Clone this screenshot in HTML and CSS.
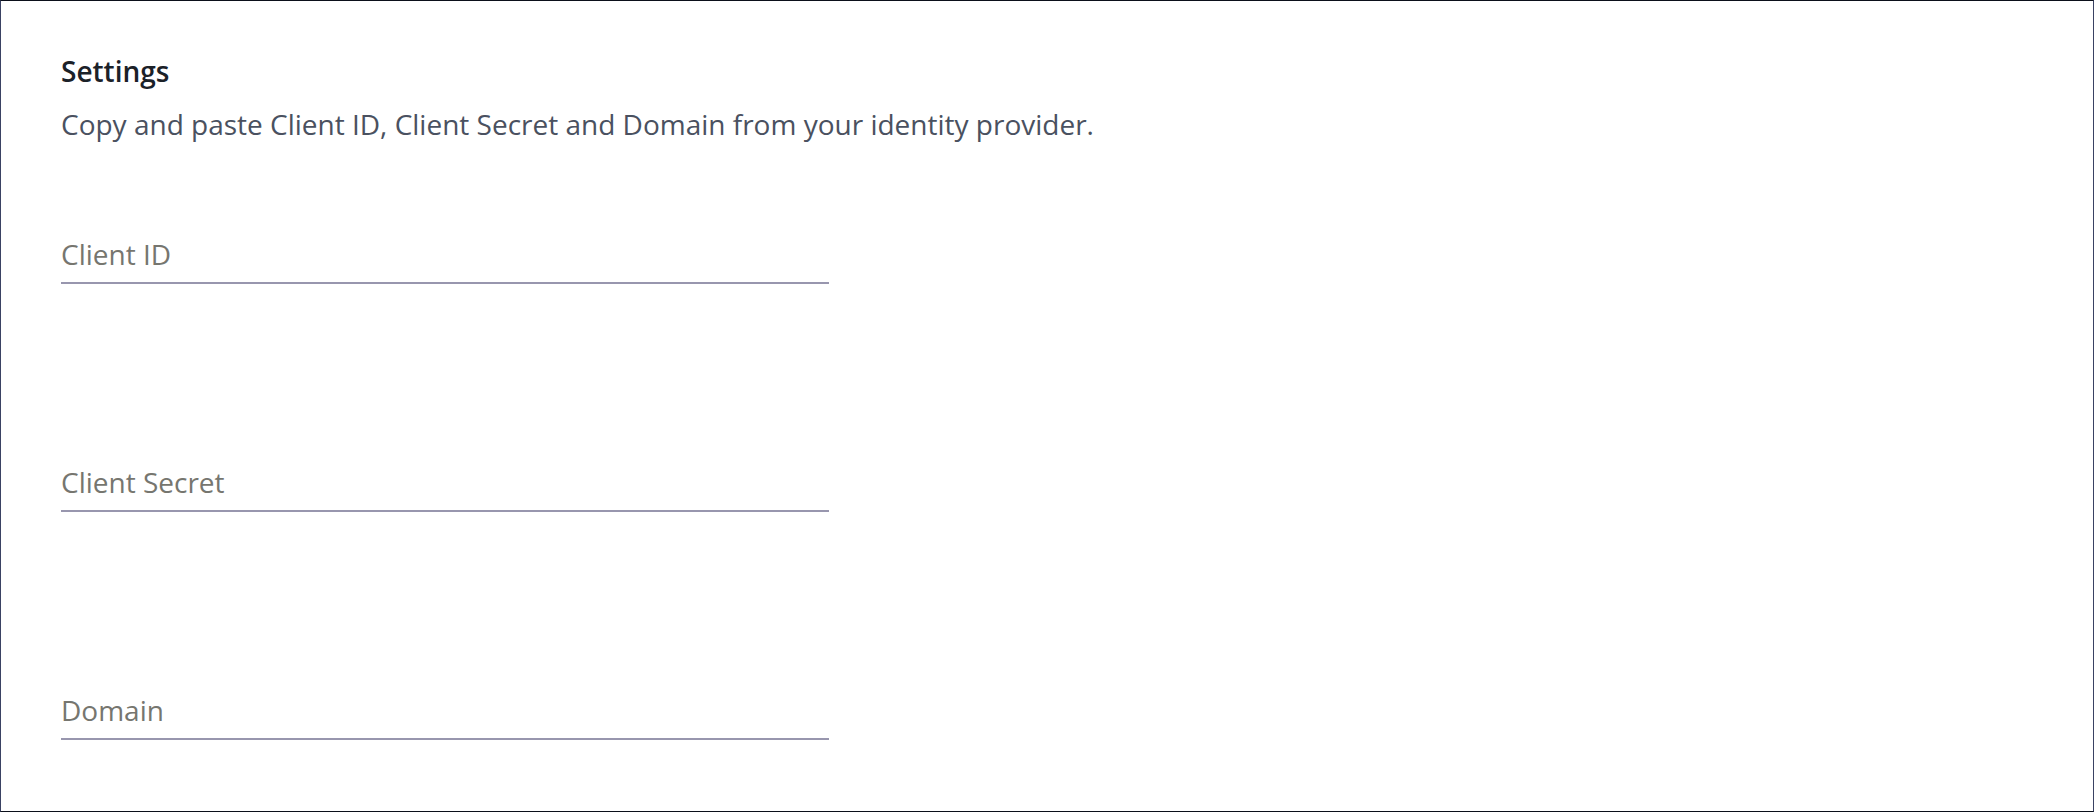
FILE: index.html
```html
<!DOCTYPE html>
<html lang="en">
<head>
<meta charset="utf-8">
<title>Settings</title>
<link rel="stylesheet" href="styles.css">
</head>
<body>
<main class="panel">
  <h1 class="title">Settings</h1>
  <p class="desc">Copy and paste Client ID, Client Secret and Domain from your identity provider.</p>
  <form class="fields">
    <label class="field"><span class="field-label">Client ID</span></label>
    <label class="field"><span class="field-label">Client Secret</span></label>
    <label class="field"><span class="field-label">Domain</span></label>
  </form>
</main>
</body>
</html>
```
FILE: styles.css
```css
html, body {
  margin: 0;
  padding: 0;
  background: #ffffff;
}
.panel {
  box-sizing: border-box;
  height: 812px;
  border-top: 1px solid #0b0f1a;
  border-bottom: 1px solid #0b0f1a;
  border-left: 1px solid #3a4263;
  border-right: 1px solid #3a4263;
  padding: 51px 60px 0 60px;
  font-family: "Open Sans", "Noto Sans", sans-serif;
}
.title {
  margin: 0;
  font-size: 28px;
  line-height: 38px;
  font-weight: 600;
  color: #1b2128;
}
.desc {
  margin: 15px 0 0 0;
  font-size: 28px;
  line-height: 38px;
  color: #4a5160;
}
.fields {
  margin-top: 93px;
  display: flex;
  flex-direction: column;
  gap: 180px;
  width: 768px;
}
.field {
  display: block;
  padding-bottom: 10px;
  border-bottom: 2px solid #9896ae;
}
.field-label {
  display: block;
  font-size: 28px;
  line-height: 36px;
  font-weight: 400;
  color: #76766f;
}
```
